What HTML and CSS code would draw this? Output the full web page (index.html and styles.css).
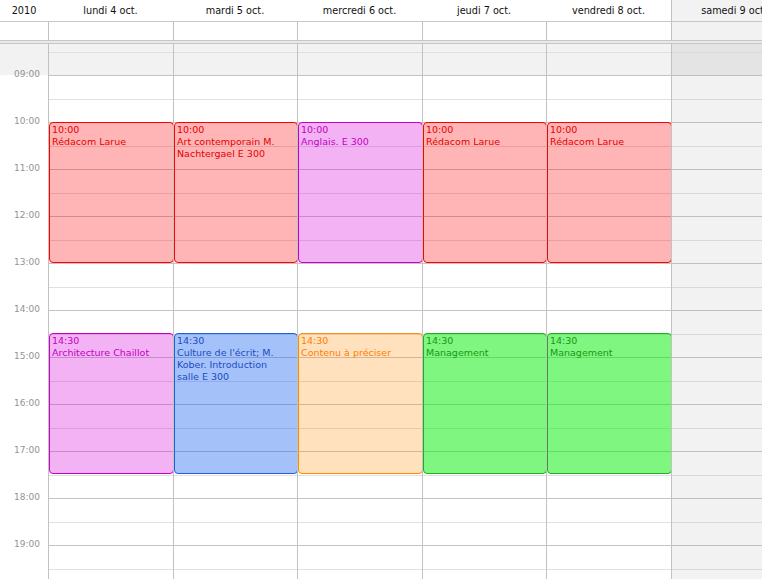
FILE: index.html
```html
<!DOCTYPE html>
<html lang="fr">
<head>
<meta charset="utf-8">
<title>Semaine</title>
<link rel="stylesheet" href="styles.css">
</head>
<body>
<div class="cal">
  <div class="row head">
    <div class="cell gutter">2010</div>
    <div class="cell day">lundi 4 oct.</div>
    <div class="cell day">mardi 5 oct.</div>
    <div class="cell day">mercredi 6 oct.</div>
    <div class="cell day">jeudi 7 oct.</div>
    <div class="cell day">vendredi 8 oct.</div>
    <div class="cell day weekend">samedi 9 oct.</div>
  </div>
  <div class="row allday">
    <div class="cell gutter"></div>
    <div class="cell col"></div>
    <div class="cell col"></div>
    <div class="cell col"></div>
    <div class="cell col"></div>
    <div class="cell col"></div>
    <div class="cell col weekend"></div>
  </div>
  <div class="sep"></div>
  <div class="row body">
    <div class="times">
      <div class="t">09:00</div>
      <div class="t">10:00</div>
      <div class="t">11:00</div>
      <div class="t">12:00</div>
      <div class="t">13:00</div>
      <div class="t">14:00</div>
      <div class="t">15:00</div>
      <div class="t">16:00</div>
      <div class="t">17:00</div>
      <div class="t">18:00</div>
      <div class="t">19:00</div>
    </div>
    <div class="grid">
      <div class="ev red am"><div class="time">10:00</div><div class="title">Rédacom Larue</div></div>
      <div class="ev magenta pm"><div class="time">14:30</div><div class="title">Architecture Chaillot</div></div>
    </div>
    <div class="grid">
      <div class="ev red am"><div class="time">10:00</div><div class="title">Art contemporain M. Nachtergael E 300</div></div>
      <div class="ev blue pm"><div class="time">14:30</div><div class="title">Culture de l'écrit; M. Kober. Introduction salle E 300</div></div>
    </div>
    <div class="grid">
      <div class="ev magenta am"><div class="time">10:00</div><div class="title">Anglais. E 300</div></div>
      <div class="ev orange pm"><div class="time">14:30</div><div class="title">Contenu à préciser</div></div>
    </div>
    <div class="grid">
      <div class="ev red am"><div class="time">10:00</div><div class="title">Rédacom Larue</div></div>
      <div class="ev green pm"><div class="time">14:30</div><div class="title">Management</div></div>
    </div>
    <div class="grid">
      <div class="ev red am"><div class="time">10:00</div><div class="title">Rédacom Larue</div></div>
      <div class="ev green pm"><div class="time">14:30</div><div class="title">Management</div></div>
    </div>
    <div class="grid weekend"></div>
  </div>
</div>
</body>
</html>
```

FILE: styles.css
```css
* { box-sizing: border-box; }

html, body {
  margin: 0;
  padding: 0;
  background: #fff;
}

.cal {
  width: 762px;
  height: 579px;
  overflow: hidden;
  font-family: "DejaVu Sans", "Liberation Sans", sans-serif;
}

.row {
  display: grid;
  grid-template-columns: 48px 125px 124px 125px 124px 125px 125px;
  width: 796px;
}

/* header */
.head {
  height: 22px;
  border-bottom: 1px solid #c6c6c6;
}
.head .cell {
  font-size: 9.7px;
  line-height: 21px;
  text-align: center;
  color: #111;
  white-space: nowrap;
}
.head .weekend {
  background: #f2f2f2;
  border-left: 1px solid #c2c2c2;
}

/* all-day row */
.allday {
  height: 18px;
}
.allday .col {
  border-left: 1px solid #c2c2c2;
}
.allday .weekend {
  background: #f2f2f2;
}

/* separator */
.sep {
  height: 4px;
  width: 796px;
  border-top: 1px solid #c6c6c6;
  border-bottom: 1px solid #c6c6c6;
  background: #e8e8e8;
}

/* body */
.body {
  height: 535px;
}

.times {
  padding-top: 7px;
  background: linear-gradient(to bottom, #f2f2f2 31px, #fff 31px);
}
.t {
  height: 47px;
  line-height: 47px;
  font-size: 9px;
  color: #939393;
  text-align: right;
  padding-right: 8px;
}

.grid {
  position: relative;
  border-left: 1px solid #c2c2c2;
  background:
    linear-gradient(to bottom, #c4c4c4 0 1px, transparent 1px 24px, #e0e0e0 24px 25px, transparent 25px) 0 -16px / 100% 47px repeat-y,
    linear-gradient(#f2f2f2, #f2f2f2) 0 0 / 100% 31px no-repeat,
    #fff;
}
.grid.weekend {
  background:
    linear-gradient(to bottom, #c0c0c0 0 1px, transparent 1px 24px, #d8d8d8 24px 25px, transparent 25px) 0 -16px / 100% 47px repeat-y,
    linear-gradient(#e4e4e4, #e4e4e4) 0 0 / 100% 31px no-repeat,
    #f2f2f2;
}

/* events */
.ev {
  position: absolute;
  left: 0;
  right: -1px;
  height: 141px;
  border: 1px solid;
  border-radius: 4px;
  padding: 1px 6px 0 2px;
  font-size: 9.5px;
  line-height: 12px;
  overflow: hidden;
}
.am { top: 78px; }
.pm { top: 289px; }

.red {
  border-color: #ff0000;
  background: rgba(255, 0, 0, 0.29);
  color: #e60000;
}
.magenta {
  border-color: #c800c8;
  background: rgba(214, 0, 214, 0.3);
  color: #c400c4;
}
.blue {
  border-color: #1f5fd8;
  background: rgba(30, 100, 240, 0.4);
  color: #1a4cc4;
}
.orange {
  border-color: #ff8a00;
  background: rgba(255, 140, 0, 0.26);
  color: #ff7e00;
}
.green {
  border-color: #1fae1f;
  background: rgba(0, 238, 0, 0.5);
  color: #149a14;
}
```
